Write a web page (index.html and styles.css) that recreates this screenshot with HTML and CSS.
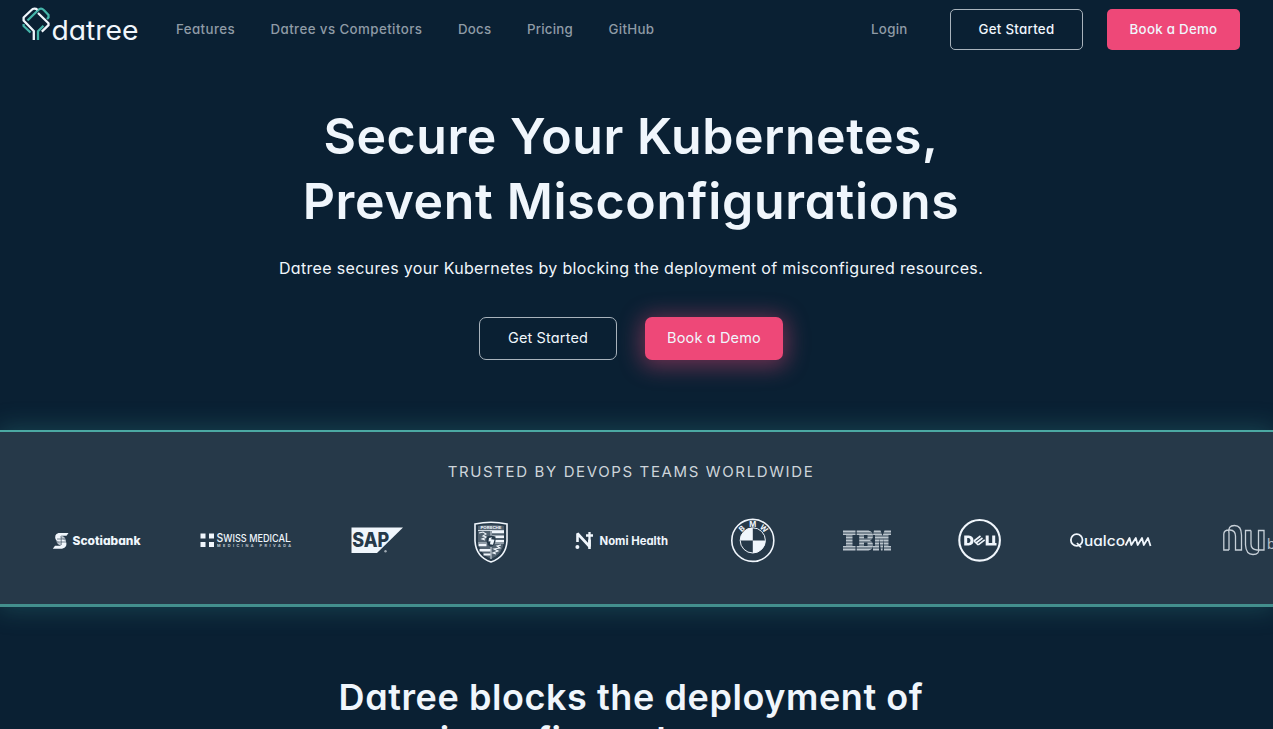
FILE: index.html
```html
<!DOCTYPE html>
<html lang="en">
<head>
<meta charset="utf-8">
<title>Datree</title>
<link rel="stylesheet" href="styles.css">
</head>
<body>
<header class="nav">
  <a class="brand" aria-label="datree">
    <svg width="118" height="44" viewBox="22 2 118 44">
      <g fill="none" stroke-width="2.300" stroke-linejoin="round">
        <path class="teal" d="M27.500 20.500 38 10.200Q39.500 8.700 41 8.700 42.500 8.700 44 10.200L48.500 15V17.500L47 19M23.600 24V26L30.500 32.500"/>
        <path class="white" d="M37.500 9.800 Q36 8.500 34 8.700 32.800 8.700 31.500 10L23.600 17.500V20.500L33.800 31V40M38 13 48.500 23.200V25.200L41.800 31.700"/>
        <path class="teal" d="M38 40V31.200L43.500 25.700"/>
      </g>
      <text class="wordmark" x="51.500" y="39.500" textLength="87" lengthAdjust="spacingAndGlyphs">datree</text>
    </svg>
  </a>
  <nav class="links">
    <a class="w-features">Features</a>
    <a class="w-vs">Datree vs Competitors</a>
    <a class="w-docs">Docs</a>
    <a class="w-pricing">Pricing</a>
    <a class="w-github">GitHub</a>
  </nav>
  <a class="login">Login</a>
  <a class="btn btn-outline btn-nav">Get Started</a>
  <a class="btn btn-pink btn-nav btn-nav-demo">Book a Demo</a>
</header>

<section class="hero">
  <h1><span class="h1-a">Secure Your Kubernetes,</span><br><span class="h1-b">Prevent Misconfigurations</span></h1>
  <p>Datree secures your Kubernetes by blocking the deployment of misconfigured resources.</p>
  <div class="actions">
    <a class="btn btn-outline btn-hero">Get Started</a>
    <a class="btn btn-pink btn-hero btn-glow">Book a Demo</a>
  </div>
</section>

<section class="trusted">
  <h2>TRUSTED BY DEVOPS TEAMS WORLDWIDE</h2>
  <div class="logos">
    <svg class="logo" width="88" height="46" viewBox="53 517 88 46">
      <path d="M58.500 533H68.500L66.500 535.800H61.500Q59.500 535.800 60.500 537.500L66 541.500Q68 547.500 62 548.800H52.800L55 545.800H60Q62.500 545 60.500 543L56 540Q53.500 534.500 58.500 533Z"/>
      <circle cx="61.200" cy="540.700" r="4.700" opacity=".75"/>
      <path class="cut" d="M57 539H66M57 542H66M61.200 536.500V545" stroke-width=".6"/>
      <text x="72.500" y="545" font-size="11.500" font-weight="800" textLength="68" lengthAdjust="spacingAndGlyphs">Scotiabank</text>
    </svg>
    <svg class="logo swiss" width="92" height="46" viewBox="200 517 92 46">
      <path d="M200.500 533.500h5v5h-5zM209 533.500h5v5h-5zM200.500 542h5v5h-5zM209 542h5v5h-5z"/>
      <text x="216.500" y="542" font-size="11.500" font-weight="500" textLength="74.500" lengthAdjust="spacingAndGlyphs">S<tspan font-size="10">WISS MEDICA</tspan>L</text>
      <text x="217" y="547" font-size="3.800" font-weight="600" textLength="74" opacity=".8">MEDICINA PRIVADA</text>
    </svg>
    <svg class="logo sap" width="53" height="46" viewBox="351 517 53 46">
      <path d="M351.500 527.500H403L377 553H351.500Z"/>
      <text class="cut-text" x="352.200" y="547.200" font-size="20" font-weight="800" textLength="37" lengthAdjust="spacingAndGlyphs">SAP</text>
      <circle cx="385.500" cy="551.300" r="1.200" opacity=".6"/>
    </svg>
    <svg class="logo porsche" width="34" height="46" viewBox="474 517 34 46">
      <path d="M475 524Q491 520.500 507 524V541Q506 557 491 562Q476 557 475 541Z" fill="none" stroke="#f0f6fc" stroke-width="1.600"/>
      <path d="M478 526Q491 523.500 504 526V541Q503 554 491 559Q479 554 478 541Z" opacity=".22"/>
      <text x="480.500" y="529" font-size="4" font-weight="700" textLength="21" lengthAdjust="spacingAndGlyphs">PORSCHE</text>
      <path d="M478 530.500H504M491 530V559M478 543H504" fill="none" stroke="#f0f6fc" stroke-width=".8"/>
      <path d="M492 531h12v2.300h-12zM492 535.500h12v2.500h-12zM494 540h10v2h-10zM478.500 544h8v2.300h-8zM479.500 549h11v2.500h-11zM483.500 553.500h7v2h-7z"/>
      <path d="M479 533l4-1 3 2-3 2 4 1-5 2 3 1M501 545l-4 1 3 2-6 1 4 2-5 2 3 1" fill="none" stroke="#f0f6fc" stroke-width="1.100"/>
      <path class="shield-hub" d="M486.500 536.500Q491 535 495.500 536.500V541Q495 545.500 491 547Q487 545.500 486.500 541Z"/>
      <path d="M489 538l3-.8-1 2 3.500.5-1.500 5-3-.5.5-3-2 .3z"/>
    </svg>
    <svg class="logo nomi" width="94" height="46" viewBox="575 517 94 46">
      <path d="M577.500 542V533.500L589.500 546.500V540" fill="none" stroke="#f0f6fc" stroke-width="2.600" stroke-linejoin="bevel"/>
      <path d="M588.200 539h2.600v10h-2.600z"/>
      <circle cx="577.400" cy="546.900" r="2"/>
      <path d="M589.500 532V539M586 535.500H593" fill="none" stroke="#f0f6fc" stroke-width="2.300"/>
      <text x="599.500" y="545" font-size="11.500" font-weight="650" textLength="68.500" lengthAdjust="spacingAndGlyphs">Nomi Health</text>
    </svg>
    <svg class="logo bmw" width="44" height="46" viewBox="731 517 44 46">
      <circle cx="752.800" cy="540.400" r="21" fill="none" stroke="#f0f6fc" stroke-width="1.600"/>
      <circle cx="752.800" cy="540.400" r="12.600" fill="none" stroke="#f0f6fc" stroke-width="1"/>
      <path d="M752.800 540.400V527.800A12.600 12.600 0 0 0 740.200 540.400ZM752.800 540.400V553A12.600 12.600 0 0 0 765.400 540.400Z"/>
      <g font-size="7.500" font-weight="700" text-anchor="middle">
        <text x="752.800" y="526.800">M</text>
        <text x="752.800" y="526.800" transform="rotate(-43 752.800 540.400)">B</text>
        <text x="752.800" y="526.800" transform="rotate(43 752.800 540.400)">W</text>
      </g>
    </svg>
    <svg class="logo ibm" width="49" height="46" viewBox="842 517 49 46">
      <g opacity=".74">
        <path d="M843 530.500h12.500v4.500h-3v11h3v4.500h-12.500V546h3v-11h-3z"/>
        <path fill-rule="evenodd" d="M856.700 530.500h11.800q4.500 1 4.500 5t-3 5q3 1 3 5t-4.500 5h-11.800V546h2.500v-11h-2.500zM864 535v3.500h3.500v-3.500zM864 542.500v3.500h3.500v-3.500z"/>
        <path d="M874 530.500h6.500l2 5.500 2-5.500h6.500v4.500h-2.500v11h2.500v4.500h-7V538l-1.500 12.500-1.500 0-2-12.500v12.500h-6V546h2v-11h-2z"/>
      </g>
      <path class="cut" d="M842 533H891M842 536H891M842 539H891M842 542H891M842 545H891M842 548H891" stroke-width=".9"/>
    </svg>
    <svg class="logo dell" width="43" height="46" viewBox="958 517 43 46">
      <circle cx="979.600" cy="540.300" r="20.300" fill="none" stroke="#f0f6fc" stroke-width="2.100"/>
      <path fill-rule="evenodd" d="M964.200 535.500h4.500q4.800.3 4.800 5t-4.800 5h-4.500zM967.200 538v5h1.300q2-.2 2-2.500t-2-2.500z"/>
      <path d="M985.700 535.500h3v7.400h3.500v2.600h-6.500zM990.700 535.500h0zM992.200 535.500h3v7.400h1.300v2.600h-4.300z"/>
      <path d="M974 541 980.500 536M976 543 982.500 538M978.200 544.800 984.700 539.800M974 541 978.200 544.800" fill="none" stroke="#f0f6fc" stroke-width="1.600"/>
    </svg>
    <svg class="logo qualcomm" width="82" height="46" viewBox="1070 517 82 46">
      <g fill="none" stroke="#f0f6fc" stroke-width="1.800" stroke-linejoin="round">
        <circle cx="1076.700" cy="540" r="5.800"/><path d="M1077 543 1081 547.500"/>
        <path d="M1125.500 545.500 1129.500 538 1131.300 545 1135.800 538 1137.700 545 1142 538 1143.800 545 1148 538 1150.500 546"/>
      </g>
      <text x="1084" y="546" font-size="14" font-weight="500" textLength="41" lengthAdjust="spacingAndGlyphs">ualco</text>
    </svg>
    <svg class="logo nubank" width="51" height="46" viewBox="1222 517 51 46">
      <g fill="none" stroke="#f0f6fc" stroke-width="1.300" opacity=".8">
        <path d="M1229 550H1223.800V534Q1224 530 1229 530H1230Q1235.500 530.500 1235.500 536V550H1241.500V535Q1241.500 525.500 1234.500 525.500T1229 533V550"/>
        <path d="M1251 530.500H1245.500V545Q1246 554.500 1253 554.500T1258.500 548V530.500H1264V550H1257Q1251 549.500 1251 544V530.500"/>
      </g>
      <text x="1267" y="549" font-size="14" opacity=".7">b</text>
    </svg>
  </div>
</section>

<section class="blocks">
  <h3><span class="h3-a">Datree blocks the deployment of</span><br><span class="h3-b">misconfigured resources</span></h3>
</section>
</body>
</html>
```
FILE: styles.css
```css
* { box-sizing: border-box; }

body {
  margin: 0;
  height: 729px;
  overflow: hidden;
  background: #0a2033;
  color: #f0f6fc;
  font-family: Inter, "Open Sans", sans-serif;
  font-feature-settings: "cv11" 1;
  display: flex;
  flex-direction: column;
}

.nav {
  display: flex;
  align-items: center;
  height: 59px;
  flex: none;
  padding: 0 33px 0 22px;
  font-size: 13.3px;
  font-weight: 500;
  white-space: nowrap;
}

.brand { height: 44px; margin: 0 36px 11px 0; }
.brand svg { display: block; overflow: visible; }
.white { stroke: #f0f6fc; }
.teal { stroke: #45b5aa; }
.wordmark { fill: #f0f6fc; font-size: 27px; font-weight: 400; }

.links { display: flex; gap: 35.500px; color: #8f9ba6; padding-bottom: 2px; }
.w-features { width: 59px; letter-spacing: .4px; }
.w-vs { width: 152px; letter-spacing: .42px; }
.w-docs { width: 33.500px; letter-spacing: .2px; }
.w-pricing { width: 46px; letter-spacing: .2px; }
.w-github { width: 47px; letter-spacing: .3px; }
.login { margin-left: auto; width: 37px; margin-right: 42px; padding-bottom: 2px; color: #8f9ba6; letter-spacing: .3px; }

.btn {
  display: flex;
  align-items: center;
  justify-content: center;
  border-radius: 5px;
  padding-bottom: 2px;
  white-space: nowrap;
}
.btn-outline { border: 1px solid #a9b3bc; }
.btn-pink { background: #ee4878; }
.btn-nav { width: 133px; height: 41px; letter-spacing: .28px; }
.btn-nav-demo { margin-left: 24px; }

.hero {
  height: 371px;
  flex: none;
  padding-top: 45px;
  padding-right: 11px;
  text-align: center;
}
.hero h1 {
  margin: 0;
  font-size: 50px;
  line-height: 65px;
  font-weight: 600;
  white-space: nowrap;
}
.h1-a { letter-spacing: .55px; }
.h1-b { letter-spacing: .7px; }
.hero p {
  margin: 22px 0 0;
  font-size: 16px;
  line-height: 24px;
  letter-spacing: .33px;
}
.actions { display: flex; justify-content: center; gap: 28px; margin-top: 37px; }
.btn-hero { width: 138px; height: 43px; border-radius: 7px; font-size: 14.500px; letter-spacing: .15px; }
.btn-glow { box-shadow: 0 3px 22px 4px rgba(238, 72, 120, .42); }

.trusted {
  height: 177px;
  flex: none;
  border-top: 2px solid #4ba9a3;
  border-bottom: 3px solid #438f8d;
  background: #263949;
  box-shadow: 0 0 24px 2px rgba(69, 181, 170, .25);
}
.trusted h2 {
  margin: 29px 11px 0 0;
  text-align: center;
  font-size: 15px;
  line-height: 22px;
  font-weight: 400;
  letter-spacing: 1.63px;
  color: #ced5db;
}
.logos { display: flex; gap: 59px; padding-left: 53px; margin-top: 34px; }
.logo { display: block; flex: none; fill: #f0f6fc; overflow: visible; }
.porsche, .qualcomm, .nubank { margin-left: 11px; }
.nomi, .ibm, .dell { margin-left: 8px; }
.qualcomm { margin-left: 10px; }
.bmw { margin-left: 3px; }
.cut { stroke: #263949; fill: none; }
.cut-text, .shield-hub { fill: #263949; }

.blocks { padding-top: 69px; padding-right: 11px; text-align: center; }
.blocks h3 {
  margin: 0;
  font-size: 36px;
  line-height: 43px;
  font-weight: 600;
  letter-spacing: .57px;
  white-space: nowrap;
}
```
